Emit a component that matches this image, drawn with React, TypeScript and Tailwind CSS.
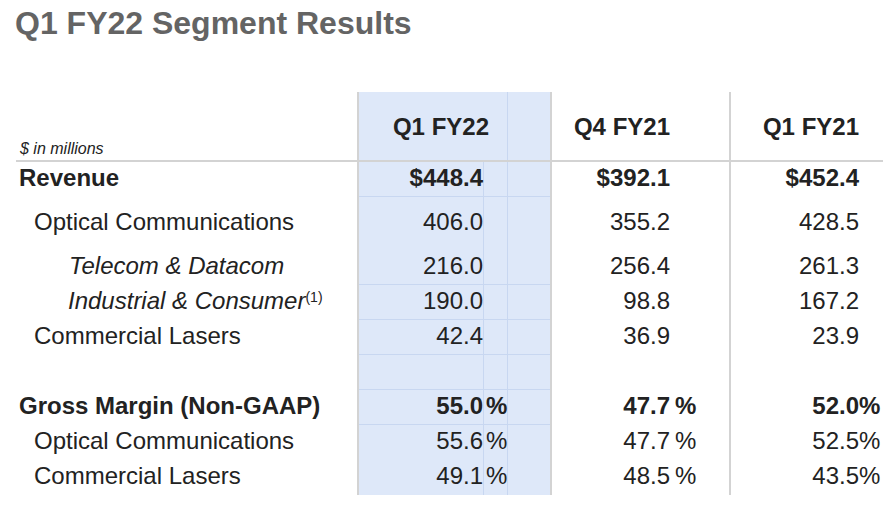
import type { ReactNode } from "react";

type Row = {
  label: ReactNode;
  indent: string;
  height: string;
  values: [string, string, string];
  bold?: boolean;
  italic?: boolean;
  pct?: boolean;
  line?: boolean;
};

const rows: Row[] = [
  { label: "Revenue", indent: "pl-[3px]", height: "h-[35px]", values: ["$448.4", "$392.1", "$452.4"], bold: true, line: true },
  { label: "Optical Communications", indent: "pl-[18px]", height: "h-[44px]", values: ["406.0", "355.2", "428.5"] },
  { label: "Telecom & Datacom", indent: "pl-[53px]", height: "h-[44px]", values: ["216.0", "256.4", "261.3"], italic: true, line: true },
  {
    label: (
      <>
        Industrial &amp; Consumer
        <span className="not-italic text-[14px] leading-none align-[7px]">(1)</span>
      </>
    ),
    indent: "pl-[52px]",
    height: "h-[35px]",
    values: ["190.0", "98.8", "167.2"],
    italic: true,
    line: true,
  },
  { label: "Commercial Lasers", indent: "pl-[18px]", height: "h-[35px]", values: ["42.4", "36.9", "23.9"], line: true },
  { label: "", indent: "", height: "h-[35px]", values: ["", "", ""], line: true },
  { label: "Gross Margin (Non-GAAP)", indent: "pl-[3px]", height: "h-[35px]", values: ["55.0", "47.7", "52.0"], bold: true, pct: true, line: true },
  { label: "Optical Communications", indent: "pl-[18px]", height: "h-[35px]", values: ["55.6", "47.7", "52.5"], pct: true },
  { label: "Commercial Lasers", indent: "pl-[18px]", height: "h-[35px]", values: ["49.1", "48.5", "43.5"], pct: true },
];

const cols = "grid grid-cols-[341px_195px_177px_154px]";

export default function App() {
  return (
    <main className="min-h-screen w-[893px] bg-white font-['Liberation_Sans',Arial,sans-serif] text-[#222]">
      <h1 className="mt-[5px] pl-[15px] text-[32px] font-bold leading-[37px] text-[#646464]">
        Q1 FY22 Segment Results
      </h1>

      <div className="ml-[16px] mt-[50px] w-[867px]">
        <div className={`${cols} h-[70px] border-b-2 border-[#d3d3d3]`}>
          <div className="flex items-end pb-[3px] pl-[4px] text-[16px] italic leading-[16px]">$ in millions</div>
          <div className="flex border-x-2 border-[#d3d3d3] bg-[#dee8f9]">
            <div className="flex w-[149px] items-end justify-end border-r border-[#c8d7f1] pb-[21px] pr-[18px] text-[24px] font-bold leading-[24px]">
              Q1 FY22
            </div>
          </div>
          <div className="flex items-end pb-[21px]">
            <span className="w-[118px] text-right text-[24px] font-bold leading-[24px]">Q4 FY21</span>
          </div>
          <div className="flex items-end border-l-2 border-[#d3d3d3] pb-[21px]">
            <span className="w-[128px] text-right text-[24px] font-bold leading-[24px]">Q1 FY21</span>
          </div>
        </div>

        {rows.map((row, i) => {
          const weight = row.bold ? "font-bold" : "font-normal";
          return (
            <div key={i} className={`${cols} ${row.height} text-[24px] leading-[24px] ${weight}`}>
              <div className={`flex items-end pb-[7px] ${row.indent} ${row.italic ? "italic" : ""}`}>
                <span className="whitespace-nowrap">{row.label}</span>
              </div>

              <div
                className={`flex border-x-2 border-[#d3d3d3] bg-[#dee8f9] ${
                  row.line ? "shadow-[inset_0_-1px_0_#c8d7f1]" : ""
                }`}
              >
                <div className="flex w-[125px] items-end justify-end border-r border-[#c8d7f1] pb-[7px]">
                  {row.values[0]}
                </div>
                <div className="flex w-[24px] items-end border-r border-[#c8d7f1] pb-[7px] pl-[2px]">
                  {row.pct ? "%" : ""}
                </div>
              </div>

              <div className="flex items-end pb-[7px]">
                <span className="w-[118px] text-right">{row.values[1]}</span>
                {row.pct && <span className="ml-[5px]">%</span>}
              </div>

              <div className="flex items-end border-l-2 border-[#d3d3d3] pb-[7px]">
                <span className="w-[128px] text-right">{row.values[2]}</span>
                {row.pct && <span>%</span>}
              </div>
            </div>
          );
        })}
      </div>
    </main>
  );
}
